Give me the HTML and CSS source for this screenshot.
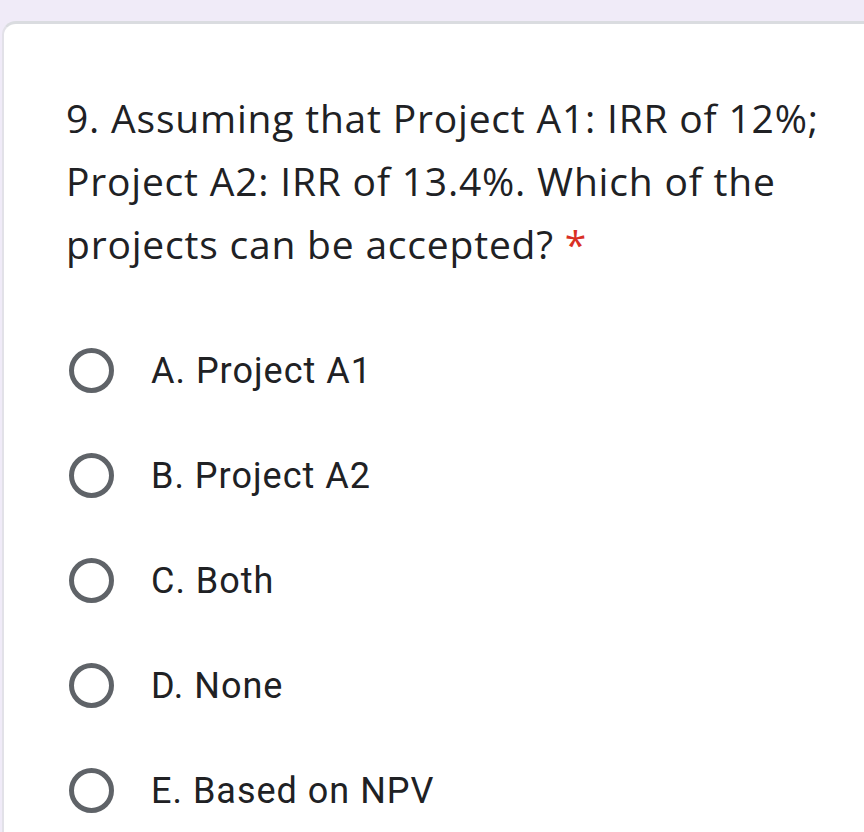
FILE: index.html
```html
<!DOCTYPE html>
<html>
<head>
<meta charset="utf-8">
<link rel="stylesheet" href="styles.css">
</head>
<body>
<div class="card">
  <div class="question">9. Assuming that Project A1: IRR of 12%; Project A2: IRR of 13.4%. Which of the projects can be accepted? <span class="req">*</span></div>
  <div class="options">
    <div class="option"><span class="radio"></span><span class="label">A. Project A1</span></div>
    <div class="option"><span class="radio"></span><span class="label">B. Project A2</span></div>
    <div class="option"><span class="radio"></span><span class="label">C. Both</span></div>
    <div class="option"><span class="radio"></span><span class="label">D. None</span></div>
    <div class="option"><span class="radio"></span><span class="label">E. Based on NPV</span></div>
  </div>
</div>
</body>
</html>
```
FILE: styles.css
```css
html, body {
  margin: 0;
  padding: 0;
  background: #f0ebf8;
  height: 832px;
  overflow: hidden;
}
.card {
  margin: 21px -20px 0 2px;
  background: #fff;
  border-top: 3px solid #dadce0;
  border-left: 2px solid #e2e1e8;
  border-radius: 14px 0 0 0;
  padding: 62px 0 0 62px;
  min-height: 900px;
  box-sizing: border-box;
}
.question {
  font-family: "Open Sans", sans-serif;
  font-size: 39px;
  letter-spacing: 0.8px;
  line-height: 63px;
  color: #202124;
  width: 770px;
}
.req {
  color: #d93025;
}
.options {
  margin-top: 43px;
  display: flex;
  flex-direction: column;
}
.option {
  display: flex;
  align-items: center;
  height: 105px;
}
.radio {
  width: 35px;
  height: 35px;
  border: 5px solid #5f6368;
  border-radius: 50%;
  flex: none;
  margin-left: 3px;
}
.label {
  font-family: Roboto, sans-serif;
  font-size: 36px;
  letter-spacing: 1px;
  color: #202124;
  margin-left: 37px;
}
```
